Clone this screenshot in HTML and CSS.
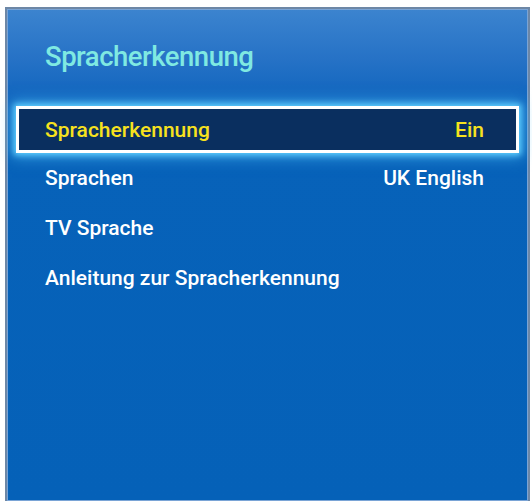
FILE: index.html
```html
<!DOCTYPE html>
<html>
<head>
<meta charset="utf-8">
<link rel="stylesheet" href="styles.css">
</head>
<body>
<div class="panel">
  <div class="header">
    <div class="title">Spracherkennung</div>
  </div>
  <div class="list">
    <div class="row selected"><span class="label">Spracherkennung</span><span class="value">Ein</span></div>
    <div class="row"><span class="label">Sprachen</span><span class="value">UK English</span></div>
    <div class="row"><span class="label">TV Sprache</span></div>
    <div class="row"><span class="label">Anleitung zur Spracherkennung</span></div>
  </div>
</div>
</body>
</html>
```
FILE: styles.css
```css
html, body {
  margin: 0;
  padding: 0;
  background: #ffffff;
  width: 532px;
  height: 501px;
  overflow: hidden;
}
.panel {
  box-sizing: border-box;
  margin: 7px 0 0 5px;
  width: 525px;
  height: 496px;
  border: 2px solid #6d87a6;
  box-shadow: inset 0 0 0 1px #7aa4d6;
  background: linear-gradient(to bottom, #3c84cf 0px, #2672c6 50px, #1367bf 85px, #0762b9 130px, #0561b8 100%);
  font-family: Roboto, "Noto Sans", sans-serif;
  display: flex;
  flex-direction: column;
}
.header {
  height: 97px;
  box-sizing: border-box;
  padding: 28px 0 0 38px;
}
.title {
  font-size: 27.5px;
  letter-spacing: -0.5px;
  line-height: 40px;
  font-weight: 500;
  color: #7fe9e2;
}
.list {
  display: flex;
  flex-direction: column;
  padding: 0 9px;
}
.row {
  height: 50px;
  box-sizing: border-box;
  display: flex;
  align-items: center;
  justify-content: space-between;
  padding: 0 35px 0 29px;
  font-size: 21px;
  font-weight: 500;
  color: #ffffff;
}
.row.selected {
  height: 47px;
  border: 3px solid #ffffff;
  background: #0a2f5f;
  color: #f7e21e;
  padding: 0 32px 0 26px;
  box-shadow: 0 0 6px 2px #5fd0ff, 0 0 14px 4px rgba(90, 200, 255, 0.6);
}
.label, .value {
  line-height: 28px;
}
```
